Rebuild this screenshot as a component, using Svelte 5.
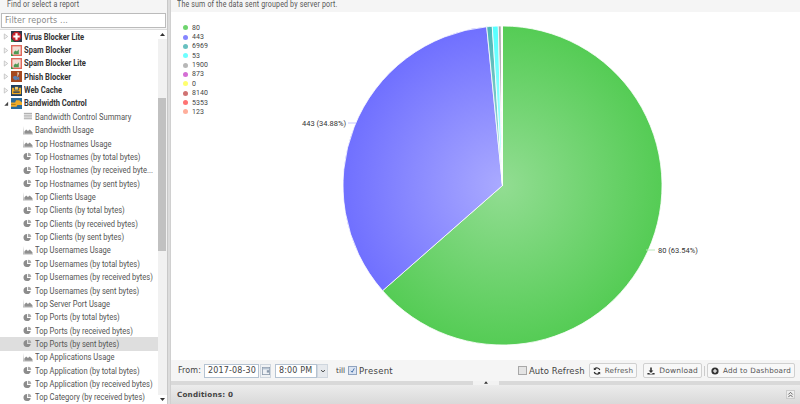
<script>
  const apps = [
    { name: 'Virus Blocker Lite', kind: 'virus' },
    { name: 'Spam Blocker', kind: 'spam' },
    { name: 'Spam Blocker Lite', kind: 'spam' },
    { name: 'Phish Blocker', kind: 'phish' },
    { name: 'Web Cache', kind: 'cache' }
  ];

  const reports = [
    ['text', 'Bandwidth Control Summary'],
    ['area', 'Bandwidth Usage'],
    ['area', 'Top Hostnames Usage'],
    ['pie', 'Top Hostnames (by total bytes)'],
    ['pie', 'Top Hostnames (by received byte...'],
    ['pie', 'Top Hostnames (by sent bytes)'],
    ['area', 'Top Clients Usage'],
    ['pie', 'Top Clients (by total bytes)'],
    ['pie', 'Top Clients (by received bytes)'],
    ['pie', 'Top Clients (by sent bytes)'],
    ['area', 'Top Usernames Usage'],
    ['pie', 'Top Usernames (by total bytes)'],
    ['pie', 'Top Usernames (by received bytes)'],
    ['pie', 'Top Usernames (by sent bytes)'],
    ['area', 'Top Server Port Usage'],
    ['pie', 'Top Ports (by total bytes)'],
    ['pie', 'Top Ports (by received bytes)'],
    ['pie', 'Top Ports (by sent bytes)'],
    ['area', 'Top Applications Usage'],
    ['pie', 'Top Application (by total bytes)'],
    ['pie', 'Top Application (by received bytes)'],
    ['pie', 'Top Category (by received bytes)']
  ];

  const ports = [
    { label: '80', pct: 63.54, color: '#55cc55', light: '#92dd92' },
    { label: '443', pct: 34.88, color: '#7070ff', light: '#aaaaff' },
    { label: '6969', pct: 0.56, color: '#4db5b5', light: '#a8dcdc' },
    { label: '53', pct: 0.6, color: '#55ffff', light: '#c0ffff' },
    { label: '1900', pct: 0.3, color: '#aaaaaa', light: '#d5d5d5' },
    { label: '873', pct: 0.03, color: '#cc55cc', light: '#cc55cc' },
    { label: '0', pct: 0.03, color: '#ffff55', light: '#ffff55' },
    { label: '8140', pct: 0.02, color: '#c85a5a', light: '#c85a5a' },
    { label: '5353', pct: 0.02, color: '#ff5a5a', light: '#ff5a5a' },
    { label: '123', pct: 0.02, color: '#ffa08a', light: '#ffa08a' }
  ];

  const cx = 331.5, cy = 173.5, r = 159.5;
  let sum = 0;
  const slices = ports.map((p, i) => {
    const a0 = (sum / 100) * Math.PI * 2;
    sum += p.pct;
    const a1 = (sum / 100) * Math.PI * 2;
    const x0 = cx + r * Math.sin(a0), y0 = cy - r * Math.cos(a0);
    const x1 = cx + r * Math.sin(a1), y1 = cy - r * Math.cos(a1);
    const large = a1 - a0 > Math.PI ? 1 : 0;
    return { ...p, id: i, d: `M${cx} ${cy}L${x0.toFixed(2)} ${y0.toFixed(2)}A${r} ${r} 0 ${large} 1 ${x1.toFixed(2)} ${y1.toFixed(2)}Z` };
  });
</script>

{#snippet arrow(open)}
  {#if open}
    <svg class="twist" viewBox="0 0 7 7"><path d="M6 1.500V6H1.500z" fill="#444" /></svg>
  {:else}
    <svg class="twist" viewBox="0 0 7 7"><path d="M1.500 .5L5.500 3.500L1.500 6.500z" fill="#f4f4f4" stroke="#b5b5b5" stroke-width=".8" /></svg>
  {/if}
{/snippet}

{#snippet appIcon(kind)}
  <svg class="app-icon" viewBox="0 0 12 12">
    {#if kind === 'virus'}
      <rect width="12" height="12" fill="#2f3a4a" />
      <circle cx="6" cy="6" r="5.200" fill="#c8242c" />
      <path d="M2.500 4.800h2.300V2.500h2.400v2.300h2.300v2.400H7.200v2.300H4.800V7.200H2.500z" fill="#fff" />
      <path d="M0 12V8.500L3.500 12z" fill="#3c9a4a" />
    {:else if kind === 'spam'}
      <rect width="12" height="12" fill="#e0685c" />
      <rect x="1.500" y="1.500" width="9" height="9" fill="#f3dcd4" />
      <path d="M3 10V7.500l2-1.500 1.500 1 2-2.500V10z" fill="#4f9a55" />
      <path d="M0 12V9l3 3z" fill="#3c9a4a" />
    {:else if kind === 'phish'}
      <rect width="12" height="12" fill="#a5481f" />
      <path d="M7 1l2 1-2 5z" fill="#e8d8c8" />
      <path d="M2 7c1-2 4-2 5 0l2-1v4L7 9c-1 2-4 1-5-2z" fill="#5d7fb0" />
    {:else if kind === 'cache'}
      <rect width="12" height="12" fill="#1f3f60" />
      <rect x="1" y="3" width="10" height="7" fill="#f0a820" />
      <rect x="4" y="1.500" width="4" height="4" fill="#f7d070" stroke="#1f3f60" stroke-width=".8" />
      <rect x="2.500" y="7" width="7" height="1.500" fill="#1f3f60" />
    {:else}
      <rect width="12" height="12" fill="#2a6a9a" />
      <path d="M0 5h4.500l1-2.500H9L12 5v2.500H7L6 9.500H0z" fill="#f0ac28" />
      <path d="M0 7h5" stroke="#9a6a10" stroke-width=".8" />
    {/if}
  </svg>
{/snippet}

<div class="page">
  <aside class="side">
    <div class="side-head"><span class="squeeze">Find or select a report</span></div>
    <input class="filter" placeholder="Filter reports ..." />
    <div class="tree-wrap">
      <div class="tree">
        {#each apps as app}
          <div class="row app">
            {@render arrow(false)}
            {@render appIcon(app.kind)}
            <span class="label">{app.name}</span>
          </div>
        {/each}
        <div class="row app">
          {@render arrow(true)}
          {@render appIcon('bandwidth')}
          <span class="label">Bandwidth Control</span>
        </div>
        {#each reports as [kind, name]}
          <div class="row leaf" class:selected={name === 'Top Ports (by sent bytes)'}>
            <svg class="leaf-icon" viewBox="0 0 12 10">
              {#if kind === 'text'}
                <path d="M2 1.500h9M2 3.500h9M2 5.500h9M2 7.500h9" stroke="#9a9a9a" stroke-width="1" />
              {:else if kind === 'area'}
                <path d="M1 0v9.500h11v-1H2z" fill="#b5b5b5" /><path d="M2.500 8.500V6l2-2 2 1.500 2-1.500 3 3v1.500z" fill="#8f8f8f" />
              {:else}
                <path d="M5.500 1a4 4 0 1 0 4 4.500H5.500z" fill="#8c8c8c" /><path d="M6.500.8v3.700h3.700A3.800 3.800 0 0 0 6.500.8z" fill="#a8a8a8" />
              {/if}
            </svg>
            <span class="label">{name}</span>
          </div>
        {/each}
      </div>
      <div class="scrollbar">
        <svg viewBox="0 0 9 9" class="sb-arrow"><path d="M2 6h5L4.500 3z" fill="#333" /></svg>
        <div class="thumb"></div>
        <svg viewBox="0 0 9 9" class="sb-arrow bottom"><path d="M2 3h5L4.500 6z" fill="#333" /></svg>
      </div>
    </div>
  </aside>

  <main class="main">
    <div class="main-head"><span class="squeeze">The sum of the data sent grouped by server port.</span></div>
    <div class="chart">
      <ul class="legend">
        {#each ports as p}
          <li><i style="background:{p.color}"></i>{p.label}</li>
        {/each}
      </ul>
      <svg class="pie" viewBox="0 0 630 348">
        <defs>
          {#each slices as s}
            <radialGradient id="g{s.id}" gradientUnits="userSpaceOnUse" cx={cx} cy={cy} r={r}>
              <stop offset="0" stop-color={s.light} />
              <stop offset="1" stop-color={s.color} />
            </radialGradient>
          {/each}
        </defs>
        {#each slices as s}
          <path d={s.d} fill="url(#g{s.id})" stroke="#fff" stroke-width=".8" />
        {/each}
        <path d="M177 111h8" stroke="#c5c5ff" fill="none" />
        <text x="175" y="113.500" text-anchor="end">443 (34.88%)</text>
        <path d="M475 238h9" stroke="#bce8bc" fill="none" />
        <text x="487" y="240.500">80 (63.54%)</text>
      </svg>
    </div>
    <div class="toolbar">
      <span class="from">From:</span>
      <span class="field date">2017-08-30</span>
      <span class="trigger cal">
        <svg viewBox="0 0 10 10"><rect x=".5" y=".5" width="9" height="9" fill="#eef1f5" stroke="#8a99aa" /><path d="M1 1h8v2H1z" fill="#b5c3d2" /><path d="M6 4h3v3H6z" fill="#8a99aa" /></svg>
      </span>
      <span class="field time">8:00 PM</span>
      <span class="trigger down">
        <svg viewBox="0 0 10 10"><path d="M2.500 4l2.500 2 2.500-2" stroke="#444" stroke-width="1.200" fill="none" /></svg>
      </span>
      <span class="till">till</span>
      <span class="check on"><svg viewBox="0 0 10 10"><path d="M2.500 5.500l2 2L7.500 2" stroke="#2f5f9f" stroke-width="1.200" fill="none" /></svg></span>
      <span class="present">Present</span>
      <span class="spacer"></span>
      <span class="check auto-check"></span>
      <span class="auto">Auto Refresh</span>
      <button class="tight">
        <svg viewBox="0 0 10 10"><path d="M8.500 3.800A3.800 3.800 0 0 0 2 2.500M1.500 6.200A3.800 3.800 0 0 0 8 7.500" stroke="#333" stroke-width="1.500" fill="none" /><path d="M1 .5v3.200h3.200zM9 9.500V6.300H5.800z" fill="#333" /></svg>
        Refresh
      </button>
      <button>
        <svg viewBox="0 0 10 10"><path d="M4 .5h2v4h2L5 7.500 2 4.500h2zM.5 7.500h2L5 9l2.500-1.500h2v2h-9z" fill="#333" /></svg>
        Download
      </button>
      <span class="sep"></span>
      <button class="tight">
        <svg viewBox="0 0 10 10"><circle cx="5" cy="5" r="4.500" fill="#333" /><path d="M5 2.500v5M2.500 5h5" stroke="#fff" stroke-width="1.400" /></svg>
        Add to Dashboard
      </button>
    </div>
    <div class="splitter"><span><svg viewBox="0 0 6 4"><path d="M0 4h6L3 0z" fill="#333" /></svg></span></div>
    <div class="conditions">
      <strong>Conditions: 0</strong>
      <span class="collapse"><svg viewBox="0 0 8 8"><path d="M1.500 4L4 1.500 6.500 4M1.500 7L4 4.500 6.500 7" stroke="#555" fill="none" /></svg></span>
    </div>
  </main>
</div>

<style>
  :global(body) {
    margin: 0;
    overflow: hidden;
  }

  .page {
    width: 800px;
    height: 404px;
    display: flex;
    overflow: hidden;
    background: #dcdcdc;
    font-family: Roboto, sans-serif;
    color: #333;
  }

  .side {
    width: 168px;
    flex: none;
    display: flex;
    flex-direction: column;
    background: #f5f5f5;
    border-right: 1px solid #c8c8c8;
    box-sizing: border-box;
  }

  .side-head {
    height: 12px;
    line-height: 9px;
    padding-left: 7px;
    font-size: 8.500px;
    letter-spacing: .2px;
    color: #555;
  }

  /* the reference text is narrower than any installed face */
  .squeeze {
    display: inline-block;
    white-space: nowrap;
    transform: scaleX(.83);
    transform-origin: left center;
  }

  .filter {
    display: block;
    box-sizing: border-box;
    width: 165px;
    height: 15px;
    margin: 1px 0 1px 1px;
    padding: 0 3px;
    border: 1px solid #bbb;
    background: #fff;
    outline: none;
    font-family: "DejaVu Sans", sans-serif;
    font-size: 8px;
    letter-spacing: .1px;
  }

  .filter::placeholder {
    color: #8a8a8a;
  }

  .tree-wrap {
    flex: 1;
    min-height: 0;
    display: flex;
    background: #fff;
    border-top: 1px solid #ddd;
  }

  .tree {
    flex: 1;
    min-width: 0;
    overflow: hidden;
  }

  .row {
    height: 13.360px;
    display: flex;
    align-items: center;
    white-space: nowrap;
    font-size: 8.800px;
  }

  .label {
    flex: none;
    transform: scaleX(.86);
    transform-origin: left center;
  }

  .row.app {
    font-weight: 700;
    color: #333;
    padding-left: 3px;
    gap: 2px;
  }

  .twist {
    width: 6px;
    height: 7px;
    flex: none;
  }

  .app-icon {
    width: 11px;
    height: 11px;
    flex: none;
    display: block;
  }

  .leaf {
    padding-left: 22px;
    gap: 2px;
    color: #555;
  }

  .leaf.selected {
    background: #dedede;
  }

  .leaf-icon {
    width: 11px;
    height: 9px;
    flex: none;
  }

  .scrollbar {
    width: 9px;
    flex: none;
    display: flex;
    flex-direction: column;
    background: #f1f1f1;
  }

  .sb-arrow {
    width: 9px;
    height: 9px;
    flex: none;
    background: #fff;
  }

  .sb-arrow.bottom {
    margin-top: auto;
  }

  .thumb {
    width: 8px;
    height: 153px;
    margin-top: 59px;
    background: #c1c1c1;
  }

  .main {
    flex: 1;
    min-width: 0;
    margin-left: 2px;
    display: flex;
    flex-direction: column;
    border-left: 1px solid #d0d0d0;
  }

  .main-head {
    height: 12px;
    line-height: 9px;
    padding-left: 6px;
    background: #f5f5f5;
    font-size: 8.500px;
    letter-spacing: .2px;
    color: #555;
  }

  .chart {
    height: 348px;
    position: relative;
    background: #fff;
  }

  .legend {
    position: absolute;
    left: 12px;
    top: 11px;
    margin: 0;
    padding: 0;
    list-style: none;
    font-size: 7px;
    letter-spacing: .05px;
    color: #444;
  }

  .legend li {
    height: 9.360px;
    display: flex;
    align-items: center;
    gap: 4px;
  }

  .legend i {
    width: 5px;
    height: 5px;
    border-radius: 50%;
    opacity: .85;
  }

  .pie {
    display: block;
    width: 630px;
    height: 348px;
  }

  .pie text {
    font-family: Roboto, sans-serif;
    font-size: 7.500px;
    fill: #333;
  }

  .toolbar {
    height: 21px;
    display: flex;
    align-items: center;
    padding: 0 5px 0 7px;
    background: #f5f5f5;
    font-family: "DejaVu Sans", sans-serif;
    font-size: 8.500px;
    letter-spacing: .1px;
    color: #444;
    white-space: nowrap;
  }

  .from {
    width: 26px;
    font-size: 8px;
  }

  .field {
    height: 14px;
    box-sizing: border-box;
    display: flex;
    align-items: center;
    padding-left: 3px;
    border: 1px solid #b5c3d2;
    background: #fff;
    font-size: 8px;
    letter-spacing: .15px;
  }

  .date {
    width: 55px;
  }

  .time {
    width: 42px;
  }

  .trigger {
    height: 14px;
    box-sizing: border-box;
    display: flex;
    align-items: center;
    justify-content: center;
    border: 1px solid #cfd6de;
    background: #e6e9ed;
  }

  .trigger svg {
    width: 8px;
    height: 8px;
  }

  .cal {
    width: 11px;
    margin-left: 1px;
    margin-right: 4px;
    background: #f0f2f4;
  }

  .down {
    width: 11px;
    margin-right: 8px;
  }

  .till {
    width: 12px;
    font-size: 7.500px;
    letter-spacing: 0;
  }

  .check {
    width: 9px;
    height: 9px;
    flex: none;
    box-sizing: border-box;
    border: 1px solid #a8a8a8;
    background: #e4e4e4;
    margin-right: 2px;
  }

  .check.on {
    background: #dbe4f2;
    border-color: #8fa3c0;
  }

  .check svg {
    display: block;
  }

  .present {
    letter-spacing: .3px;
  }

  .spacer {
    flex: 1;
  }

  .auto {
    margin-right: 4px;
  }

  button {
    height: 15px;
    box-sizing: border-box;
    display: flex;
    align-items: center;
    gap: 4px;
    padding: 0 3px 0 3px;
    margin-left: 0;
    border: 1px solid #d0d0d0;
    border-radius: 2px;
    background: #f8f8f8;
    font-family: "DejaVu Sans", sans-serif;
    font-size: 7.500px;
    letter-spacing: .2px;
    color: #555;
  }

  button + button {
    margin-left: 6px;
  }

  button svg {
    width: 8px;
    height: 8px;
  }

  .tight {
    font-size: 7.200px;
  }

  .sep {
    width: 1px;
    height: 10px;
    margin: 0 2px;
    background: #ccc;
  }

  .splitter {
    height: 4px;
    display: flex;
    justify-content: center;
    background: #d9d9d9;
  }

  .splitter span {
    width: 26px;
    height: 4px;
    display: flex;
    justify-content: center;
    background: #f2f2f2;
  }

  .splitter svg {
    width: 4px;
    height: 3px;
  }

  .conditions {
    flex: 1;
    display: flex;
    align-items: center;
    justify-content: space-between;
    padding: 0 5px 0 6px;
    background: linear-gradient(#ececec, #d9d9d9);
    font-family: "DejaVu Sans", sans-serif;
    font-size: 7.200px;
    color: #444;
    letter-spacing: .2px;
  }

  .collapse {
    width: 9px;
    height: 9px;
    display: block;
    box-sizing: border-box;
    border: 1px solid #ccc;
    background: #eee;
  }

  .collapse svg {
    display: block;
  }
</style>
